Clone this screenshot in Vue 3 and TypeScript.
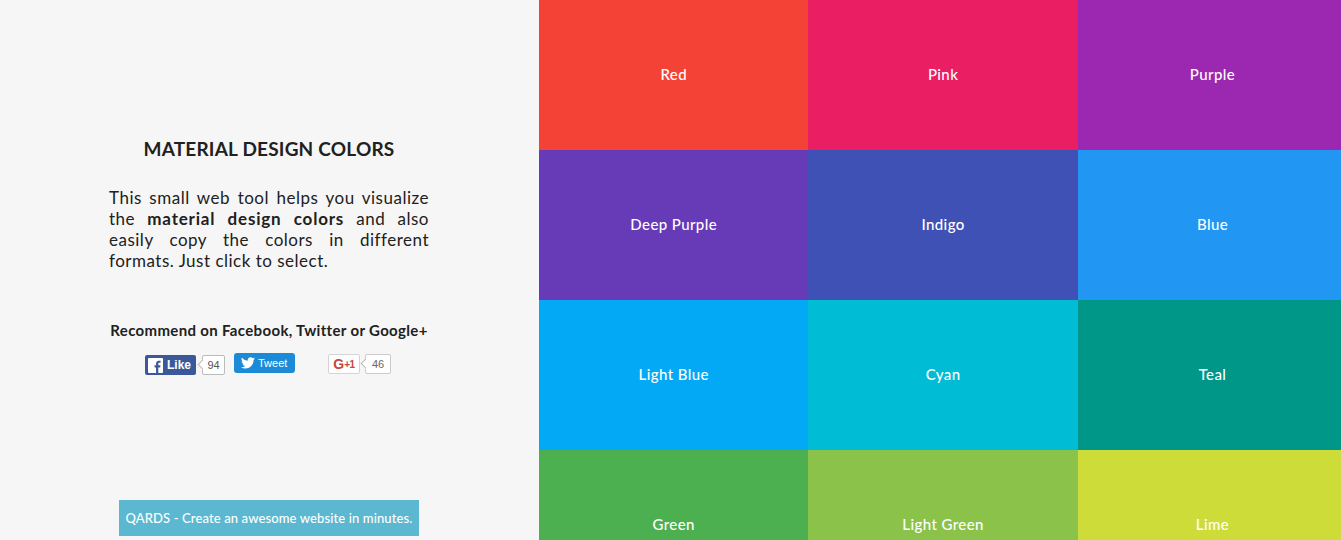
<script setup lang="ts">
const colors: { name: string; hex: string }[] = [
  { name: 'Red', hex: '#F44336' },
  { name: 'Pink', hex: '#E91E63' },
  { name: 'Purple', hex: '#9C27B0' },
  { name: 'Deep Purple', hex: '#673AB7' },
  { name: 'Indigo', hex: '#3F51B5' },
  { name: 'Blue', hex: '#2196F3' },
  { name: 'Light Blue', hex: '#03A9F4' },
  { name: 'Cyan', hex: '#00BCD4' },
  { name: 'Teal', hex: '#009688' },
  { name: 'Green', hex: '#4CAF50' },
  { name: 'Light Green', hex: '#8BC34A' },
  { name: 'Lime', hex: '#CDDC39' },
]
</script>

<template>
  <div class="page">
    <aside class="intro">
      <h1 class="title">MATERIAL DESIGN COLORS</h1>
      <p class="blurb">
        This small web tool helps you visualize the <strong>material design colors</strong> and also
        easily copy the colors in different formats. Just click to select.
      </p>
      <h2 class="recommend">Recommend on Facebook, Twitter or Google+</h2>
      <div class="social">
        <a class="fb">
          <svg class="fb-icon" viewBox="0 0 16 16">
            <rect width="16" height="16" rx="1" fill="#fff" />
            <path d="M11 16V10h2l.3-2.4H11V6.200c0-.7.2-1.100 1.200-1.100h1.200V3c-.3 0-1-.1-1.800-.1-1.800 0-3 1.100-3 3.100v1.600H7V10h1.600v6z" fill="#3b5998" />
          </svg>
          <span>Like</span>
        </a>
        <span class="count fb-count">94</span>
        <a class="tw">
          <svg width="14" height="12" viewBox="0 0 24 20">
            <path d="M24 2.400a9.800 9.800 0 0 1-2.800.8A4.900 4.900 0 0 0 23.300.500a9.800 9.800 0 0 1-3.100 1.200 4.900 4.900 0 0 0-8.400 4.500A14 14 0 0 1 1.700.900a4.900 4.900 0 0 0 1.500 6.600 4.900 4.900 0 0 1-2.200-.6c0 2.400 1.700 4.400 3.900 4.900a4.900 4.900 0 0 1-2.200.1 4.900 4.900 0 0 0 4.600 3.400A9.900 9.900 0 0 1 0 17.300 14 14 0 0 0 7.500 19.500c9.100 0 14.300-7.700 14-14.600A10 10 0 0 0 24 2.400z" fill="#fff" />
          </svg>
          <span>Tweet</span>
        </a>
        <a class="gplus"><b>G</b><i>+1</i></a>
        <span class="count g-count">46</span>
      </div>
      <a class="qards">QARDS - Create an awesome website in minutes.</a>
    </aside>
    <main class="grid">
      <div v-for="c in colors" :key="c.name" class="swatch" :style="{ background: c.hex }">{{ c.name }}</div>
    </main>
  </div>
</template>

<style>
html, body { margin: 0; height: 540px; overflow: hidden; background: #f6f6f6; }
</style>

<style scoped>
.page {
  display: flex;
  height: 540px;
  overflow: hidden;
  font-family: Lato, "Open Sans", sans-serif;
}
.intro {
  box-sizing: border-box;
  width: 539px;
  flex: none;
  height: 540px;
  padding: 137px 110px 4px 109px;
  background: #f6f6f6;
  display: flex;
  flex-direction: column;
  color: #212121;
}
.title {
  margin: 0 0 27px;
  font-size: 19px;
  line-height: 23px;
  font-weight: 700;
  letter-spacing: 0.2px;
  text-align: center;
}
.blurb {
  margin: 0 0 49px;
  font-size: 17px;
  line-height: 21px;
  letter-spacing: 0.5px;
  text-align: justify;
}
.blurb strong { font-weight: 700; letter-spacing: 0.8px; }
.recommend {
  margin: 0 0 14px;
  font-size: 15px;
  line-height: 20px;
  font-weight: 700;
  letter-spacing: 0.34px;
  text-align: center;
  white-space: nowrap;
}
.social {
  display: flex;
  align-items: center;
  height: 20px;
  padding-left: 36px;
  font-family: "Liberation Sans", Arial, sans-serif;
}
.fb {
  box-sizing: border-box;
  width: 51px;
  height: 20px;
  margin-top: 2px;
  display: flex;
  align-items: center;
  gap: 4px;
  padding-left: 3px;
  background: #3b5998;
  border-radius: 2px;
  color: #fff;
  font-size: 12px;
  font-weight: 700;
}
.fb-icon { width: 15px; height: 15px; }
.count {
  position: relative;
  box-sizing: border-box;
  height: 20px;
  display: flex;
  align-items: center;
  justify-content: center;
  background: #fff;
  border: 1px solid #bbb;
  border-radius: 2px;
  font-size: 11px;
  color: #555;
}
.count::before {
  content: "";
  position: absolute;
  left: -4px;
  top: 5px;
  width: 6px;
  height: 6px;
  background: #fff;
  border-left: 1px solid #bbb;
  border-bottom: 1px solid #bbb;
  transform: rotate(45deg);
}
.fb-count { width: 23px; margin: 2px 0 0 6px; }
.tw {
  box-sizing: border-box;
  width: 61px;
  height: 20px;
  margin: -2px 0 0 9px;
  display: flex;
  align-items: center;
  gap: 3px;
  padding-left: 7px;
  background: #1b8bd8;
  border-radius: 3px;
  color: #fff;
  font-size: 11px;
}
.gplus {
  box-sizing: border-box;
  width: 32px;
  height: 20px;
  margin: 0 0 0 33px;
  display: flex;
  align-items: center;
  justify-content: center;
  background: #fff;
  border: 1px solid #d4d4d4;
  border-radius: 2px;
  color: #c8453b;
  font-weight: 700;
}
.gplus b { font-size: 14px; }
.gplus i { font-style: normal; font-size: 10px; letter-spacing: -0.5px; }
.g-count { width: 26px; margin-left: 5px; border-color: #ccc; color: #666; }
.qards {
  box-sizing: border-box;
  width: 300px;
  height: 36px;
  margin: auto 0 0 10px;
  display: flex;
  align-items: center;
  justify-content: center;
  background: #5bb8d0;
  color: #fff;
  font-size: 13px;
  font-weight: 500;
  letter-spacing: 0.12px;
  white-space: nowrap;
}
.grid {
  flex: none;
  display: grid;
  grid-template-columns: repeat(3, 269.4px);
  grid-auto-rows: 150px;
  align-content: start;
}
.swatch {
  display: flex;
  align-items: center;
  justify-content: center;
  padding-bottom: 2px;
  box-sizing: border-box;
  color: #fff;
  font-size: 15px;
  font-weight: 500;
  letter-spacing: 0.4px;
}
</style>
